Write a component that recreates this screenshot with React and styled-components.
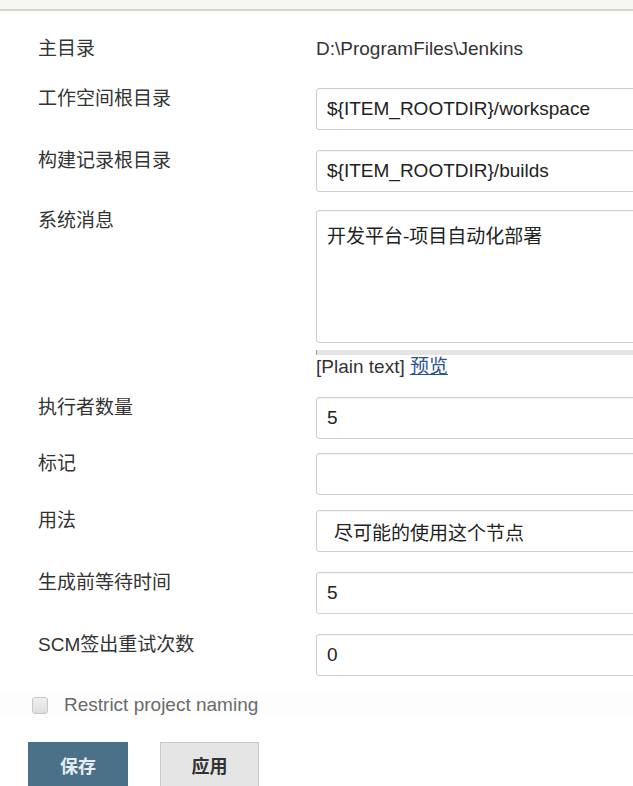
import React from "react";
import styled, { createGlobalStyle } from "styled-components";

const Global = createGlobalStyle`
  html, body { margin: 0; padding: 0; overflow: hidden; background: #fff; }
  body {
    font-family: "Liberation Sans", Arial, "Noto Sans CJK SC", sans-serif;
    font-size: 19px;
    color: #333;
  }
`;

const TopBar = styled.div`
  height: 9px;
  background: #f6f6f2;
  border-bottom: 2px solid #d6d6d0;
  box-shadow: 0 2px 0 #fbfbf4;
`;

const Form = styled.div`
  display: flex;
  flex-direction: column;
  width: 700px;
`;

const Row = styled.div`
  display: grid;
  grid-template-columns: 278px 1fr;
  padding-left: 38px;
  margin-top: ${(p) => p.$mt}px;
`;

const Label = styled.div`
  line-height: 22px;
  color: #333;
  padding-top: ${(p) => p.$pt || 0}px;
`;

const Value = styled.div`
  line-height: 22px;
  color: #333;
`;

const Field = styled.div`
  display: flex;
  flex-direction: column;
`;

const Input = styled.div`
  box-sizing: border-box;
  height: 42px;
  width: 360px;
  border: 1px solid #cfcfcf;
  border-radius: 3px;
  padding: 0 ${(p) => p.$pl || 10}px;
  display: flex;
  align-items: center;
  color: #222;
  background: #fff;
  box-shadow: inset 0 1px 1px rgba(0, 0, 0, 0.04);
`;

const TextArea = styled(Input)`
  height: 133px;
  align-items: flex-start;
  padding-top: 10px;
`;

const Handle = styled.div`
  margin-top: 7px;
  height: 5px;
  width: 360px;
  background: #e4e4e4;
  border-left: 1px solid #9a9a9a;
`;

const Hint = styled.div`
  margin-top: 1px;
  line-height: 22px;
  color: #333;
`;

const Link = styled.a`
  color: #2f5494;
  text-decoration: underline;
`;

const CheckRow = styled.div`
  display: flex;
  align-items: center;
  gap: 16px;
  padding-left: 32px;
  margin-top: 16px;
  height: 26px;
  background: #fdfdfd;
`;

const Box = styled.span`
  box-sizing: border-box;
  width: 16px;
  height: 17px;
  border: 1px solid #c8c8c8;
  border-radius: 3px;
  background: linear-gradient(#f0f0f0, #dedede);
`;

const CheckText = styled.span`
  color: #6a6a6a;
`;

const Buttons = styled.div`
  display: flex;
  gap: 32px;
  padding-left: 28px;
  margin-top: 24px;
`;

const Button = styled.button`
  box-sizing: border-box;
  width: ${(p) => (p.$primary ? 100 : 99)}px;
  height: 50px;
  border: 1px solid ${(p) => (p.$primary ? "#46708a" : "#c9c9c9")};
  background: ${(p) => (p.$primary ? "#4b7189" : "#e5e5e5")};
  color: ${(p) => (p.$primary ? "#e3edf3" : "#333")};
  font-family: "Noto Sans CJK SC", sans-serif;
  font-weight: 700;
  font-size: 18px;
  padding: 0;
  padding-bottom: 4px;
`;

export default function App() {
  return (
    <>
      <Global />
      <TopBar />
      <Form>
        <Row $mt={27}>
          <Label>主目录</Label>
          <Value>D:\ProgramFiles\Jenkins</Value>
        </Row>
        <Row $mt={28}>
          <Label>工作空间根目录</Label>
          <Input>${"{"}ITEM_ROOTDIR{"}"}/workspace</Input>
        </Row>
        <Row $mt={20}>
          <Label>构建记录根目录</Label>
          <Input>${"{"}ITEM_ROOTDIR{"}"}/builds</Input>
        </Row>
        <Row $mt={18}>
          <Label>系统消息</Label>
          <Field>
            <TextArea>开发平台-项目自动化部署</TextArea>
            <Handle />
            <Hint>
              [Plain text] <Link href="#">预览</Link>
            </Hint>
          </Field>
        </Row>
        <Row $mt={19}>
          <Label>执行者数量</Label>
          <Input>5</Input>
        </Row>
        <Row $mt={14}>
          <Label>标记</Label>
          <Input />
        </Row>
        <Row $mt={15}>
          <Label>用法</Label>
          <Input $pl={17}>尽可能的使用这个节点</Input>
        </Row>
        <Row $mt={20}>
          <Label>生成前等待时间</Label>
          <Input>5</Input>
        </Row>
        <Row $mt={20}>
          <Label>SCM签出重试次数</Label>
          <Input>0</Input>
        </Row>
        <CheckRow>
          <Box />
          <CheckText>Restrict project naming</CheckText>
        </CheckRow>
        <Buttons>
          <Button $primary>保存</Button>
          <Button>应用</Button>
        </Buttons>
      </Form>
    </>
  );
}
